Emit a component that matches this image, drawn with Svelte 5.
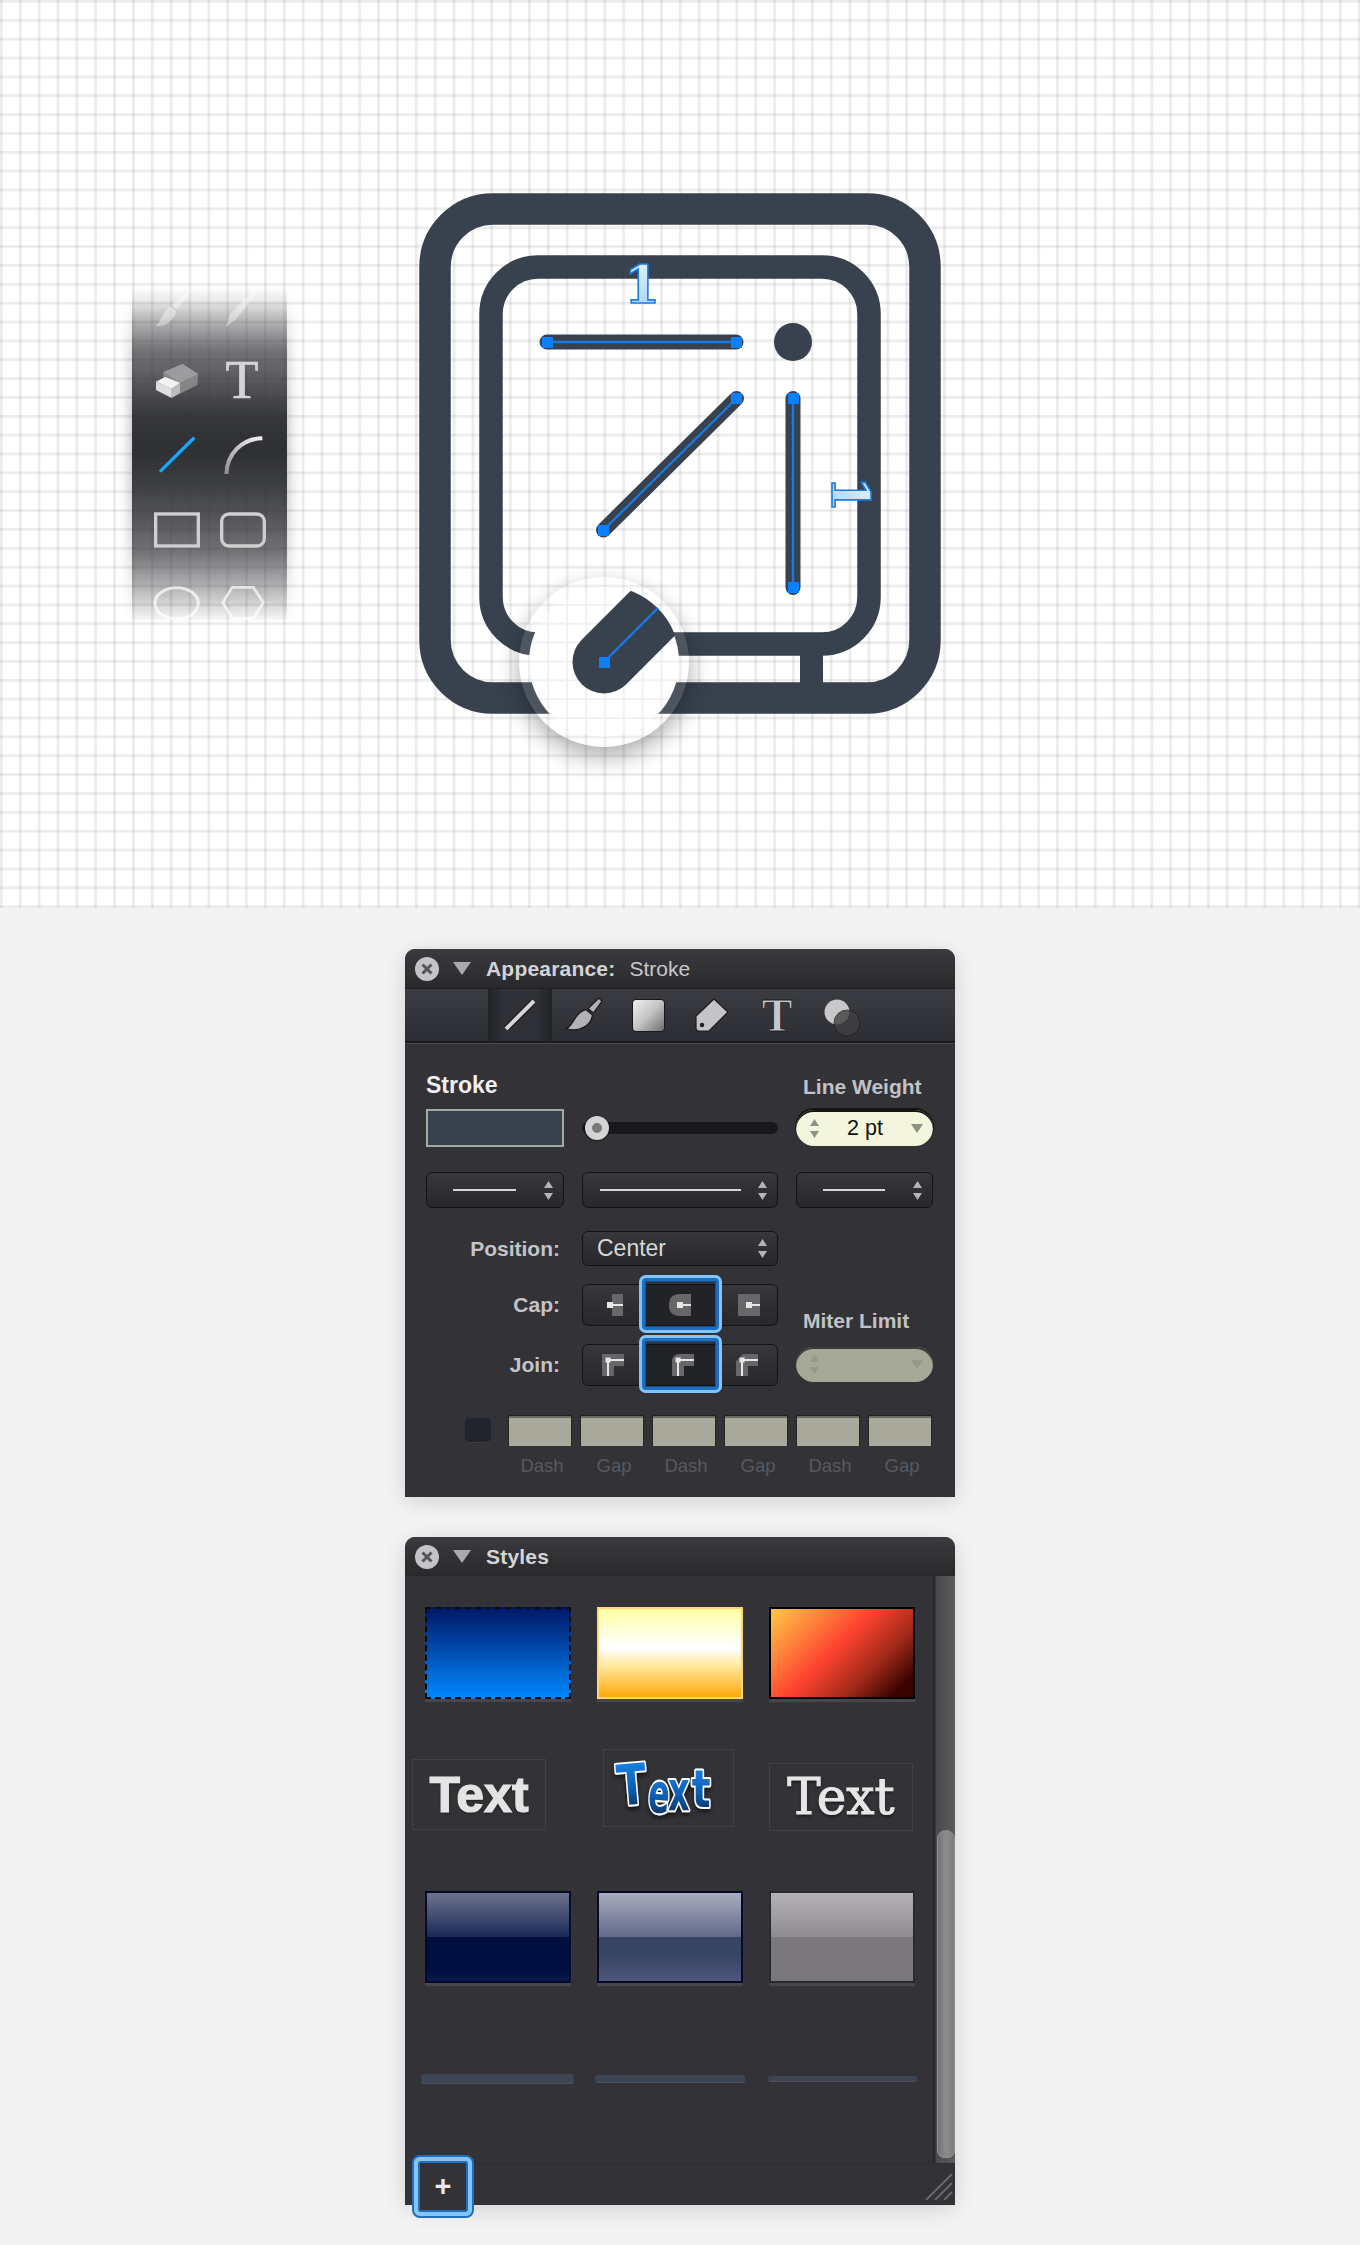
<script>
	const dashes = ['Dash', 'Gap', 'Dash', 'Gap', 'Dash', 'Gap'];
	const tabs = ['line', 'brush', 'fill', 'tag', 'text', 'effects'];
</script>

{#snippet updown(color = '#b4b4b8')}
	<svg class="updown" width="9" height="19" viewBox="0 0 9 19">
		<path d="M4.5 0 9 7H0Z M0 12h9L4.5 19Z" fill={color} />
	</svg>
{/snippet}

{#snippet closeRow(title, sub)}
	<header class="title">
		<svg width="24" height="24" viewBox="0 0 24 24" class="close">
			<circle cx="12" cy="12" r="12" fill="#c4c4c6" />
			<path d="M7.5 7.5 16.5 16.5M16.5 7.5 7.5 16.5" stroke="#55555a" stroke-width="3" />
		</svg>
		<svg width="18" height="13" viewBox="0 0 18 13" class="tri"><path d="M0 0H18L9 13Z" fill="#a9a9ac" /></svg>
		<b>{title}</b>
		{#if sub}<span>{sub}</span>{/if}
	</header>
{/snippet}

<main>
	<section class="canvas">
		<div class="toolbar-fade"><div class="toolbar"></div></div>
		<svg class="art" width="1360" height="908" viewBox="0 0 1360 908">
			<defs>
				<filter id="blur" x="-40%" y="-40%" width="180%" height="180%"><feGaussianBlur stdDeviation="12" /></filter>
				<mask id="outside" maskUnits="userSpaceOnUse" x="400" y="450" width="420" height="440">
					<rect x="400" y="450" width="420" height="440" fill="#fff" />
					<circle cx="604" cy="662" r="85" fill="#000" />
				</mask>
				<pattern id="faint" width="18.87" height="18.87" patternUnits="userSpaceOnUse">
					<rect width="18.87" height="18.87" fill="#fff" />
					<path d="M1 0V18.87M0 1H18.87" stroke="#f1f1f1" stroke-width="2" />
				</pattern>
				<linearGradient id="one" x1="0" y1="0" x2="0" y2="1">
					<stop offset="0" stop-color="#e8f3ff" />
					<stop offset="1" stop-color="#a8d2f8" />
				</linearGradient>
				<linearGradient id="arc" x1="0" y1="1" x2="1" y2="0">
					<stop offset="0" stop-color="#8f8f92" />
					<stop offset="1" stop-color="#f4f4f4" />
				</linearGradient>
			</defs>

			<!-- tool strip -->
			<g transform="translate(100 250) scale(.3333)">
				<path d="M265 120 272 126 232 178 216 166ZM212 170 228 184C222 212 198 230 168 228 184 216 186 182 212 170Z" fill="#fff" opacity=".4" />
				<path d="M462 118 470 128 408 208 378 232 388 194Z" fill="#fff" opacity=".4" />
				<path d="M190 366 248 342 295 372 292 405 222 440 190 420Z" fill="#858587" />
				<path d="M190 366 248 342 295 372 240 398Z" fill="#9c9c9e" />
				<path d="M168 395 195 381 240 398 215 416Z" fill="#f3f3f3" />
				<path d="M168 395 215 416 215 444 168 420Z" fill="#dedede" />
				<path d="M215 416 240 398 240 428 215 444Z" fill="#bdbdbd" />
				<text x="426" y="443" text-anchor="middle" class="t-tool">T</text>
				<path d="M180 665 283 563" stroke="#1c3a55" stroke-width="15" />
				<path d="M180 665 283 563" stroke="#1ea8f4" stroke-width="10" />
				<path d="M379 672C381 612 425 566 487 565" fill="none" stroke="url(#arc)" stroke-width="12" />
				<rect x="167" y="792" width="128" height="96" fill="none" stroke="#cfcfd0" stroke-width="10" />
				<rect x="365" y="792" width="128" height="96" rx="22" fill="none" stroke="#cfcfd0" stroke-width="10" />
				<ellipse cx="230" cy="1060" rx="65" ry="47" fill="none" stroke="#fff" stroke-width="9" opacity=".7" />
				<path d="M368 1058 397 1012H460L490 1058 460 1105H397Z" fill="none" stroke="#fff" stroke-width="8" opacity=".7" />
			</g>

			<!-- the icon -->
			<rect x="435" y="209" width="490" height="489" rx="58" fill="none" stroke="#38424f" stroke-width="31.5" />
			<rect x="491" y="267" width="378" height="377" rx="47" fill="none" stroke="#38424f" stroke-width="23.5" />
			<rect x="800" y="650" width="23" height="45" fill="#38424f" />
			<circle cx="793" cy="342" r="19" fill="#38424f" />
			<g fill="none" stroke-linecap="round">
				<path d="M547 342H736M736.5 398.5 603.5 530M793 398.5V587.5" stroke="#38424f" stroke-width="15" />
				<path d="M547 342H736M736.5 398.5 603.5 530M793 398.5V587.5" stroke="#1778e6" stroke-width="2.4" stroke-linecap="butt" />
			</g>
			<g fill="#0a80ff">
				<rect x="542" y="337" width="11" height="11" />
				<rect x="731" y="337" width="11" height="11" />
				<rect x="731" y="393" width="11" height="11" />
				<rect x="598" y="525" width="11" height="11" />
				<rect x="788" y="393" width="11" height="11" />
				<rect x="788" y="582" width="11" height="11" />
			</g>
			<text x="642" y="303" text-anchor="middle" class="num">1</text>
			<text transform="translate(832 494) rotate(90)" text-anchor="middle" class="num">1</text>

			<!-- cap close-up -->
			<g mask="url(#outside)"><circle cx="604" cy="672" r="85" fill="#000" opacity=".32" filter="url(#blur)" /></g>
			<circle cx="604" cy="662" r="85" fill="#fff" opacity=".1" />
			<circle cx="604" cy="662" r="75" fill="url(#faint)" />
			<clipPath id="lens"><circle cx="604" cy="662" r="76" /></clipPath>
			<path d="M604 662 680 586" stroke="#38424f" stroke-width="63" stroke-linecap="round" clip-path="url(#lens)" />
			<path d="M604 662 658 608" stroke="#1778e6" stroke-width="2.4" />
			<rect x="599" y="657" width="11" height="11" fill="#0a80ff" />
		</svg>
	</section>

	<div class="panels">
		<article class="panel appearance">
			{@render closeRow('Appearance:', 'Stroke')}
			<nav class="tabs">
				{#each tabs as tab, i}
					<div class="tab" class:on={i === 0}>
						{#if tab === 'line'}
							<svg width="34" height="34" viewBox="0 0 34 34">
								<path d="M3 31 31 3" stroke="#1b1b1e" stroke-width="6.5" />
								<path d="M3 31 31 3" stroke="#d6d6d6" stroke-width="4" />
							</svg>
						{:else if tab === 'brush'}
							<svg width="38" height="36" viewBox="0 0 36 34">
								<path d="M32 1 35 4 27 15 22 11ZM20 12 26 17C25 27 13 34 1 30 8 28 9 14 20 12Z" fill="#b2b2b4" stroke="#1b1b1e" stroke-width="1.2" />
							</svg>
						{:else if tab === 'fill'}
							<div class="fill-icon"></div>
						{:else if tab === 'tag'}
							<svg width="34" height="34" viewBox="0 0 34 34">
								<path d="M19 1 33 14 14 33H4Q1 33 1 30V18Z" fill="#c4c4c6" stroke="#1b1b1e" stroke-width="1.2" />
								<circle cx="7" cy="27" r="2.2" fill="#222" />
							</svg>
						{:else if tab === 'text'}
							<span class="t-tab">T</span>
						{:else}
							<svg class="fx" width="38" height="38" viewBox="0 0 38 38">
								<circle cx="14" cy="13" r="12.5" fill="#c8c8ca" />
								<circle cx="24" cy="24" r="13" fill="#3f3f42" stroke="#222" stroke-width="1" opacity=".8" />
							</svg>
						{/if}
					</div>
				{/each}
			</nav>

			<div class="body">
				<div class="cols labels">
					<h3>Stroke</h3>
					<span></span>
					<h4>Line Weight</h4>
				</div>

				<div class="cols controls">
					<div class="swatch"></div>
					<div class="slider"><i></i></div>
					<div class="pill on">
						{@render updown('#8f9185')}
						<span>2 pt</span>
						<svg width="12" height="9" viewBox="0 0 12 9"><path d="M0 0H12L6 9Z" fill="#8f9185" /></svg>
					</div>
				</div>

				<div class="cols selects">
					<div class="select"><hr />{@render updown()}</div>
					<div class="select"><hr />{@render updown()}</div>
					<div class="select"><hr />{@render updown()}</div>
				</div>

				<div class="cols position">
					<label>Position:</label>
					<div class="select"><span>Center</span>{@render updown()}</div>
				</div>

				<div class="cols capjoin">
					<label class="cap-l">Cap:</label>
					<div class="seg cap-s">
						<div class="s">
							<svg class="nudge-4" width="18" height="22" viewBox="0 0 18 22"><rect x="6" width="11" height="22" fill="#67676a" /><path d="M4 11H17" stroke="#e6e6e6" stroke-width="2" /><rect x="1" y="8" width="6" height="6" fill="#e6e6e6" /></svg>
						</div>
						<div class="s sel">
							<svg width="22" height="22" viewBox="0 0 22 22"><path d="M22 0V22H11Q0 22 0 11T11 0Z" fill="#67676a" /><path d="M9 11H22" stroke="#e6e6e6" stroke-width="2" /><rect x="8" y="8" width="6" height="6" fill="#e6e6e6" /></svg>
						</div>
						<div class="s">
							<svg width="22" height="22" viewBox="0 0 22 22"><rect width="22" height="22" fill="#67676a" /><path d="M9 11H22" stroke="#e6e6e6" stroke-width="2" /><rect x="8" y="8" width="6" height="6" fill="#e6e6e6" /></svg>
						</div>
					</div>
					<div class="miter">
						<h4>Miter Limit</h4>
						<div class="pill off">
							{@render updown('#979986')}
							<svg width="12" height="9" viewBox="0 0 12 9"><path d="M0 0H12L6 9Z" fill="#979986" /></svg>
						</div>
					</div>
					<label class="join-l">Join:</label>
					<div class="seg join-s">
						<div class="s">
							<svg class="nudge-3" width="22" height="22" viewBox="0 0 22 22"><path d="M0 0H22V12H12V22H0Z" fill="#67676a" /><path d="M6 6H22M6 6V22" stroke="#e6e6e6" stroke-width="2" /><rect x="3.500" y="3.500" width="5" height="5" fill="#e6e6e6" /></svg>
						</div>
						<div class="s sel">
							<svg class="nudge-3" width="22" height="22" viewBox="0 0 22 22"><path d="M0 22V8Q0 0 8 0H22V12H12V22Z" fill="#67676a" /><path d="M6 6H22M6 6V22" stroke="#e6e6e6" stroke-width="2" /><rect x="3.500" y="3.500" width="5" height="5" fill="#e6e6e6" /></svg>
						</div>
						<div class="s">
							<svg class="nudge-back" width="22" height="22" viewBox="0 0 22 22"><path d="M0 22V7L7 0H22V12H12V22Z" fill="#67676a" /><path d="M6 6H22M6 6V22" stroke="#e6e6e6" stroke-width="2" /><rect x="3.500" y="3.500" width="5" height="5" fill="#e6e6e6" /></svg>
						</div>
					</div>
				</div>

				<div class="dashes">
					<div class="check"></div>
					{#each dashes as d}
						<div class="dash"><div class="box"></div><span>{d}</span></div>
					{/each}
				</div>
			</div>
		</article>

		<article class="panel styles">
			{@render closeRow('Styles')}
			<div class="styles-main">
				<div class="grid">
					<div class="sw s1"></div>
					<div class="sw s2"></div>
					<div class="sw s3"></div>

					<div class="tb tb1"><span>Text</span></div>
					<div class="tb tb2">
						<svg width="131" height="78" viewBox="0 0 131 78">
							<defs>
								<linearGradient id="comic" x1="0" y1="0" x2="0" y2="1">
									<stop offset="0" stop-color="#1e8cf5" />
									<stop offset=".55" stop-color="#0d5fb4" />
									<stop offset="1" stop-color="#04203f" />
								</linearGradient>
								<filter id="soft" x="-10%" y="-10%" width="120%" height="130%"><feDropShadow dx="0" dy="3" stdDeviation="2" flood-color="#000" flood-opacity=".6" /></filter>
							</defs>
							<g filter="url(#soft)" class="comic" fill="url(#comic)" stroke="#fff" stroke-width="3" paint-order="stroke" stroke-linejoin="round">
								<text transform="translate(15 57) rotate(-5) scale(1 1.3)" font-size="44">T</text>
								<text transform="translate(44 63) rotate(4) scale(.8 1.4)" font-size="40">e</text>
								<text transform="translate(65 61) scale(.85 1.4)" font-size="40">x</text>
								<text transform="translate(89 58) scale(1 1.3)" font-size="40">t</text>
							</g>
						</svg>
					</div>
					<div class="tb tb3"><span>Text</span></div>

					<div class="sw s4"><i></i></div>
					<div class="sw s5"><i></i></div>
					<div class="sw s6"><i></i></div>

					<div class="thin t1"></div>
					<div class="thin t2"></div>
					<div class="thin t3"></div>
				</div>
				<div class="scrollbar"><div class="thumb"></div></div>
			</div>
			<footer class="bottom">
				<div class="add"><span>+</span></div>
				<svg class="grip" width="28" height="26" viewBox="0 0 28 26">
					<path d="M1 26 27 0M10 26 27 9M19 26 27 18" stroke="#68686c" stroke-width="2" />
				</svg>
			</footer>
		</article>
	</div>
</main>

<style>
	:global(body) {
		margin: 0;
		background: #f3f3f3;
		font-family: 'Liberation Sans', Arial, sans-serif;
	}

	main {
		width: 1360px;
		height: 2245px;
		overflow: hidden;
	}

	.canvas {
		position: relative;
		height: 908px;
		background-color: #fff;
		background-image:
			linear-gradient(to right, rgba(0, 0, 0, 0.05) 0, rgba(0, 0, 0, 0.09) 1px, rgba(0, 0, 0, 0.05) 2.5px, transparent 3px),
			linear-gradient(to bottom, rgba(0, 0, 0, 0.05) 0, rgba(0, 0, 0, 0.09) 1px, rgba(0, 0, 0, 0.05) 2.5px, transparent 3px);
		background-size: 18.87px 18.87px;
	}

	.art {
		position: absolute;
		inset: 0;
	}

	.toolbar-fade {
		position: absolute;
		left: 102px;
		top: 287px;
		width: 215px;
		height: 335px;
		--fade: linear-gradient(to bottom, transparent 0, rgba(0, 0, 0, 0.1) 4%, rgba(0, 0, 0, 0.36) 10%, rgba(0, 0, 0, 0.68) 19%, rgba(0, 0, 0, 0.82) 29%, rgba(0, 0, 0, 0.97) 39%, #000 49%, rgba(0, 0, 0, 0.93) 59%, rgba(0, 0, 0, 0.82) 69%, rgba(0, 0, 0, 0.68) 79%, rgba(0, 0, 0, 0.42) 88%, rgba(0, 0, 0, 0.07) 98.5%, transparent 100%);
		-webkit-mask-image: var(--fade);
		mask-image: var(--fade);
	}

	.toolbar {
		margin: 0 30px;
		height: 100%;
		background: #2f3034;
		box-shadow: 0 0 14px rgba(0, 0, 0, 0.35);
	}

	.t-tool {
		font: 162px 'Liberation Serif', serif;
		fill: #d4d4d6;
		stroke: #d4d4d6;
		stroke-width: 2;
	}

	.num {
		font: 700 52px 'DejaVu Serif', serif;
		fill: url(#one);
		stroke: #1a7fe0;
		stroke-width: 1.6;
	}

	.panels {
		display: flex;
		flex-direction: column;
		align-items: center;
		gap: 40px;
		padding-top: 41px;
	}

	.panel {
		width: 550px;
		background: #333337;
		border-radius: 10px 10px 0 0;
		box-shadow: 0 4px 22px rgba(0, 0, 0, 0.14);
	}

	.appearance {
		height: 548px;
	}

	.styles {
		height: 668px;
	}

	.title {
		display: flex;
		align-items: center;
		height: 39px;
		padding-left: 10px;
		box-sizing: border-box;
		background: linear-gradient(#3b3b3f, #29292c);
		border-radius: 10px 10px 0 0;
		color: #c8c8cc;
		font-size: 21px;
	}

	.tri {
		margin: 0 15px 0 14px;
	}

	.title b {
		color: #d4d4d8;
		letter-spacing: 0.2px;
	}

	.title span {
		margin-left: 14px;
	}

	.tabs {
		display: flex;
		padding-left: 83px;
		background: linear-gradient(#3a3c42, #2d2e33);
		border-top: 1px solid #1f1f22;
		border-bottom: 2px solid #1c1c1f;
		box-shadow: 0 1px 0 #4a4a4e;
		height: 52px;
	}

	.tab {
		width: 64px;
		display: flex;
		align-items: center;
		justify-content: center;
	}

	.tab.on {
		background: linear-gradient(to right, #222327, #303137 25%, #303137 75%, #222327);
	}

	.fx {
		margin: 6px 0 0 3px;
	}

	.fill-icon {
		width: 31px;
		height: 31px;
		border-radius: 4px;
		border: 1px solid #18181a;
		background: linear-gradient(135deg, #f0f0f0, #c4c4c4 50%, #6e6e70);
	}

	.t-tab {
		font: 700 46px/1 'Liberation Serif', serif;
		color: #c8c8ca;
		-webkit-text-stroke: 0.8px #1b1b1e;
		margin: 2px 0 0 2px;
	}

	.body {
		padding: 29px 0 0 21px;
	}

	.cols {
		display: grid;
		grid-template-columns: 138px 196px 137px;
		column-gap: 18px;
	}

	h3,
	h4 {
		margin: 0;
		line-height: 26px;
		font-weight: 700;
	}

	h3 {
		font-size: 23px;
		color: #f0f0f2;
	}

	h4 {
		font-size: 21px;
		color: #c2c2c6;
		padding-left: 7px;
	}

	.labels h4 {
		margin-top: 2px;
	}

	.labels {
		height: 26px;
	}

	.controls {
		margin-top: 11px;
		height: 38px;
		align-items: center;
	}

	.swatch {
		box-sizing: border-box;
		height: 38px;
		border: 2px solid #a4a6aa;
		background: #38424f;
	}

	.slider {
		position: relative;
		height: 12px;
		border-radius: 6px;
		background: #19191b;
	}

	.slider i {
		position: absolute;
		left: 3px;
		top: -6px;
		width: 24px;
		height: 24px;
		box-sizing: border-box;
		border-radius: 50%;
		border: 7px solid #d4d4d4;
		background: #77777a;
		box-shadow: 0 1px 2px rgba(0, 0, 0, 0.6);
	}

	.pill {
		box-sizing: border-box;
		height: 36px;
		border-radius: 18px;
		display: flex;
		align-items: center;
		justify-content: space-between;
		padding: 0 10px 0 14px;
		color: #111;
		font-size: 21.500px;
	}

	.pill.on {
		background: #f3f5dc;
		box-shadow: inset 0 2px 0 #16160f, 0 -1px 0 1px #141416;
	}

	.pill.off {
		background: #a6a897;
		box-shadow: inset 0 2px 0 #3c3c38;
	}

	.selects {
		margin-top: 25px;
	}

	.select {
		box-sizing: border-box;
		height: 36px;
		display: flex;
		align-items: center;
		border: 1px solid #141416;
		border-radius: 6px;
		background: linear-gradient(#37373c, #28282b);
		padding: 0 10px 0 26px;
		color: #d8d8da;
		font-size: 23px;
	}

	.selects .select:nth-child(2) {
		padding-left: 17px;
	}

	.select hr {
		flex: 1;
		height: 2px;
		border: 0;
		margin: 0 28px 0 0;
		background: #d6d6d6;
	}

	.selects .select:nth-child(2) hr {
		margin-right: 17px;
	}

	.select span {
		flex: 1;
	}

	.position {
		margin-top: 23px;
	}

	.position .select {
		height: 35px;
		padding-left: 14px;
	}

	label {
		font-weight: 700;
		font-size: 21px;
		color: #c4c4c8;
		text-align: right;
		padding-right: 4px;
		align-self: center;
	}

	.capjoin {
		margin-top: 18px;
		grid-template-rows: 42px 42px;
		row-gap: 18px;
	}

	.cap-l,
	.join-l {
		grid-column: 1;
	}

	.cap-s,
	.join-s {
		grid-column: 2;
	}

	.cap-l,
	.cap-s {
		grid-row: 1;
	}

	.join-l,
	.join-s {
		grid-row: 2;
	}

	.miter {
		grid-column: 3;
		grid-row: 1 / 3;
		display: flex;
		flex-direction: column;
		justify-content: flex-end;
		padding-bottom: 4px;
	}

	.miter h4 {
		margin-bottom: 13px;
	}

	.miter .pill {
		height: 35px;
	}

	.seg {
		display: flex;
		box-sizing: border-box;
		height: 42px;
		border: 1px solid #141416;
		border-radius: 6px;
		background: linear-gradient(#37373c, #28282b);
	}

	.s {
		position: relative;
		display: flex;
		align-items: center;
		justify-content: center;
		width: 57px;
	}

	.s svg {
		position: relative;
	}

	.nudge-4 {
		margin-left: 8px;
	}

	.nudge-3 {
		margin-left: 5px;
	}

	.nudge-back {
		margin-right: 4px;
	}

	.s.sel {
		width: 83px;
		flex: none;
		background: #222326;
	}

	.s.sel::before {
		content: '';
		position: absolute;
		left: 0;
		right: 0;
		top: -10px;
		bottom: -8px;
		box-sizing: border-box;
		border: 6px solid #1c6fc0;
		border-radius: 7px;
		box-shadow: inset 0 0 0 1px #15508c;
	}

	.s.sel::after {
		content: '';
		position: absolute;
		left: 0;
		right: 0;
		top: -10px;
		bottom: -8px;
		box-sizing: border-box;
		border: 3.500px solid #83c5f8;
		border-radius: 7px;
	}

	.dashes {
		display: flex;
		gap: 8px;
		margin: 29px 0 0 39px;
	}

	.check {
		width: 26px;
		height: 24px;
		margin: 3px 9px 0 0;
		border-radius: 4px;
		background: #22252b;
		box-shadow: 0 1px 0 #3c3c40;
	}

	.dash {
		width: 64px;
		text-align: center;
	}

	.box {
		height: 31px;
		background: #a9aa9b;
		box-shadow: inset 0 2px 0 #6a6b60;
		border: 1px solid #242426;
		border-bottom: 0;
		box-sizing: border-box;
	}

	.dash span {
		display: block;
		margin-top: 10px;
		line-height: 20px;
		font-size: 18.500px;
		color: #57585e;
		padding-left: 4px;
	}

	.styles-main {
		display: flex;
		height: 587px;
	}

	.grid {
		flex: 1;
		display: grid;
		grid-template-columns: 146px 146px 146px;
		grid-template-rows: 92px 82px 92px 10px;
		column-gap: 26px;
		row-gap: 50px;
		padding: 31px 0 0 20px;
		align-content: start;
	}

	.sw {
		position: relative;
		box-sizing: border-box;
		border: 2px solid #000;
		box-shadow: 0 3px 1px rgba(255, 255, 255, 0.1);
	}

	.s1 {
		border: 2px dashed #0c0c10;
		background: linear-gradient(#001766, #0088ff) border-box;
	}

	.s2 {
		border-color: #ffd47a;
		background: linear-gradient(#ffffa2, #fffff0 35%, #fff 45%, #ffeda8 62%, #ffa80c);
	}

	.s3 {
		background: linear-gradient(135deg, #ffbb44 5%, #ff4230 45%, #a02a18 70%, #3c0400 90%);
	}

	.s4 {
		border-color: #050a2c;
		background: linear-gradient(#6c748c, #1a2856 50%);
	}

	.s5 {
		border-color: #050a2c;
		background: linear-gradient(#a8acbc, #62698a 50%);
	}

	.s6 {
		border-color: #2a2a2e;
		background: linear-gradient(#b4b2b4, #8e8c8e 50%);
	}

	.sw i {
		position: absolute;
		left: 0;
		right: 0;
		top: 50%;
		bottom: 0;
	}

	.s4 i {
		background: linear-gradient(#000f40 80%, #0a1a50);
	}

	.s5 i {
		background: linear-gradient(#384464 40%, #4c577a);
	}

	.s6 i {
		background: #7a787c;
	}

	.s4,
	.s5,
	.s6 {
		margin-top: 10px;
		height: 92px;
	}

	.tb {
		display: flex;
		align-items: center;
		justify-content: center;
		box-sizing: border-box;
		border: 1px solid #404045;
	}

	.tb1 {
		margin: 10px 25px 0 -13px;
		height: 71px;
		font: 700 50px 'Liberation Sans', sans-serif;
		color: #e4e4e4;
		-webkit-text-stroke: 1.2px #e4e4e4;
		text-shadow: 0 1px 3px rgba(0, 0, 0, 0.5);
	}

	.tb2 {
		margin: 0 9px 0 6px;
		height: 78px;
	}

	.comic {
		font-family: 'DejaVu Sans', sans-serif;
		font-weight: 700;
	}

	.tb3 {
		margin: 14px 2px 0 0;
		height: 68px;
		font: 400 50px 'DejaVu Serif', serif;
		color: #e6e6e6;
		-webkit-text-stroke: 1px #e6e6e6;
		text-shadow: 0 2px 3px rgba(0, 0, 0, 0.6);
	}

	.thin {
		align-self: start;
		background: #3c4554;
		border-radius: 3px;
		border-bottom: 1px solid #505056;
		box-sizing: border-box;
	}

	.t1 {
		height: 10px;
		margin: 51px -3px 0 -4px;
	}

	.t2 {
		height: 8px;
		margin: 52px -2px 0 -2px;
	}

	.t3 {
		height: 6px;
		margin: 53px -2px 0 -1px;
	}

	.scrollbar {
		width: 22px;
		box-sizing: border-box;
		padding: 254px 0 5px 4px;
		background: linear-gradient(to right, #29292c 0, #29292c 2px, #4a4a4e 3px, #5c5c5f);
	}

	.thumb {
		height: 100%;
		border-radius: 9px 9px 8px 8px;
		background: linear-gradient(to right, #6f6f72, #8e8e90 50%, #79797c);
		box-shadow: inset 0 0 0 1px #8c8c8e;
	}

	.bottom {
		position: relative;
		height: 42px;
		border-top: 1px solid #2d2d30;
		box-sizing: border-box;
		display: flex;
		justify-content: flex-end;
		align-items: flex-end;
		padding: 0 2px 5px 0;
	}

	.add {
		position: absolute;
		left: 7px;
		top: -9px;
		width: 62px;
		height: 63px;
		box-sizing: border-box;
		border: 2.500px solid #1f6fbd;
		outline: 4px solid #83c5f8;
		outline-offset: -6px;
		border-radius: 8px;
		display: flex;
		align-items: center;
		justify-content: center;
		background: #333337;
		box-shadow: inset 0 0 0 4px #83c5f8, inset 0 0 0 6px #1f6fbd;
		color: #e8e8ee;
		font: 700 29px 'Liberation Sans', sans-serif;
	}
</style>
